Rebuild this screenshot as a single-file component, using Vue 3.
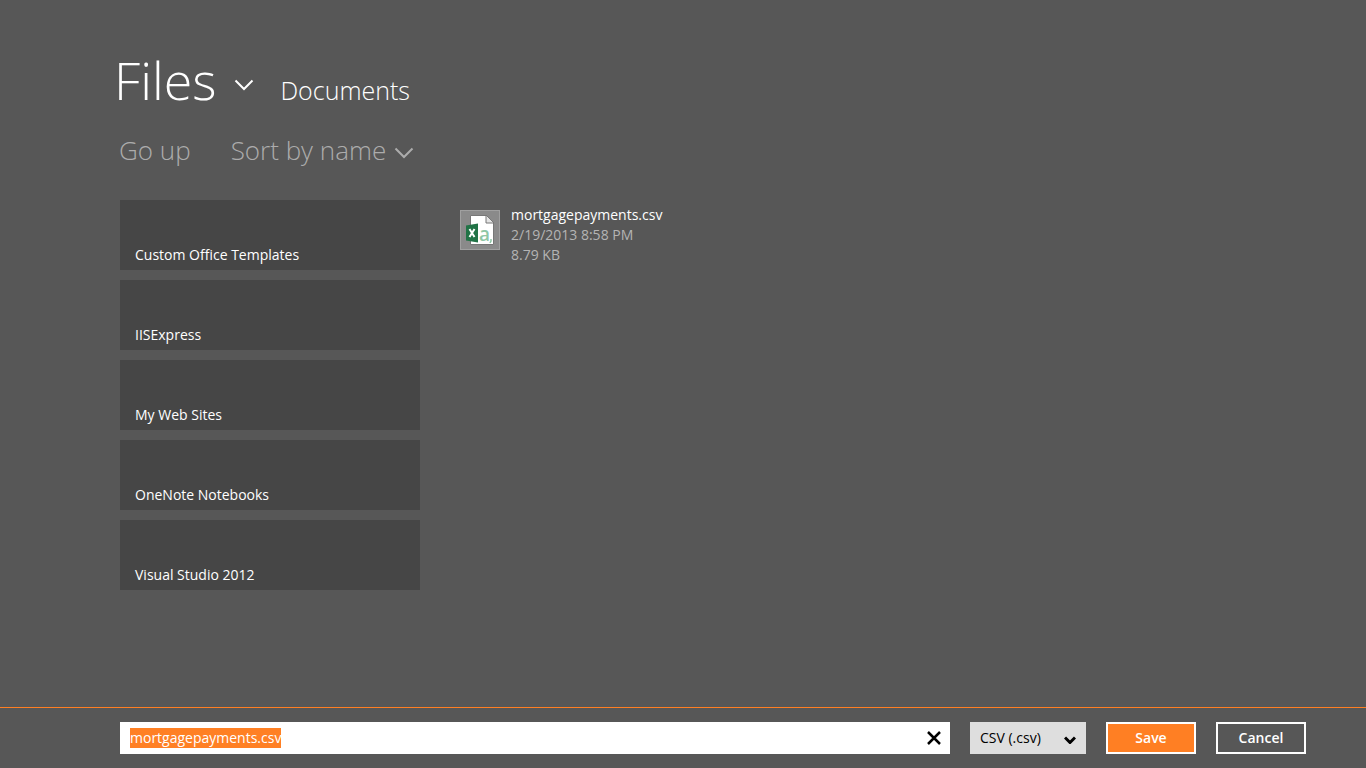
<template>
  <div class="picker">
    <header class="picker-header">
      <div class="location">
        <h1 class="location-title">
          <button type="button" class="location-button">
            Files
            <svg class="chevron" viewBox="0 0 20 12" aria-hidden="true">
              <path d="M1.5 1.5 10 10l8.5-8.5" />
            </svg>
          </button>
        </h1>
        <h2 class="location-folder">Documents</h2>
      </div>
      <nav class="commands" aria-label="Folder commands">
        <button type="button" class="command">Go up</button>
        <button type="button" class="command">
          Sort by name
          <svg class="chevron" viewBox="0 0 20 12" aria-hidden="true">
            <path d="M1.5 1.5 10 10l8.5-8.5" />
          </svg>
        </button>
      </nav>
    </header>

    <main class="items">
      <ul class="folders">
        <li v-for="folder in folders" :key="folder">
          <button type="button" class="folder">{{ folder }}</button>
        </li>
      </ul>

      <ul class="files">
        <li v-for="file in files" :key="file.name">
          <button type="button" class="file">
            <svg class="file-icon" viewBox="0 0 40 40" aria-hidden="true">
              <rect x="0.5" y="0.5" width="39" height="39" fill="#8a8a8a" stroke="#a0a0a0" />
              <path d="M10.5 5.5h16l7 7v22h-23z" fill="#fff" stroke="#777" />
              <path d="M26 5v8h8z" fill="#e4e4e4" stroke="#777" />
              <path d="m6 15.5 12-2v19l-12-2z" fill="#217346" />
              <path d="m9.500 19 5 8m0-8-5 8" fill="none" stroke="#fff" stroke-width="2" />
              <text x="19" y="31" class="icon-letter">a</text>
              <path d="M31 29v2l-1 2" fill="none" stroke="#8fc7a6" stroke-width="1.5" />
            </svg>
            <span class="file-info">
              <span class="file-name">{{ file.name }}</span>
              <span>{{ file.modified }}</span>
              <span>{{ file.size }}</span>
            </span>
          </button>
        </li>
      </ul>
    </main>

    <form class="save-bar" @submit.prevent>
      <div class="name-field">
        <input
          ref="nameInput"
          v-model="fileName"
          type="text"
          class="name-input"
          aria-label="File name"
          autocomplete="off"
          spellcheck="false"
        />
        <button type="button" class="clear" aria-label="Clear" @click="clearName">
          <svg viewBox="0 0 14 14" aria-hidden="true">
            <path d="m1 1 12 12M13 1 1 13" />
          </svg>
        </button>
      </div>
      <div class="type-field">
        <select v-model="fileType" class="type-select" aria-label="File type">
          <option value="csv">CSV (.csv)</option>
        </select>
        <svg class="type-arrow" viewBox="0 0 12 8" aria-hidden="true">
          <path d="m1 1.500 5 5 5-5" />
        </svg>
      </div>
      <button type="submit" class="action primary">Save</button>
      <button type="button" class="action">Cancel</button>
    </form>
  </div>
</template>

<script setup>
import { ref, onMounted } from "vue";

const folders = ref([
  "Custom Office Templates",
  "IISExpress",
  "My Web Sites",
  "OneNote Notebooks",
  "Visual Studio 2012",
]);

const files = ref([
  {
    name: "mortgagepayments.csv",
    modified: "2/19/2013 8:58 PM",
    size: "8.79 KB",
  },
]);

const fileName = ref("mortgagepayments.csv");
const fileType = ref("csv");
const nameInput = ref(null);

const clearName = () => {
  fileName.value = "";
  nameInput.value.focus();
};

// The suggested name starts selected so typing replaces it
onMounted(() => {
  nameInput.value.focus();
  nameInput.value.select();
});
</script>

<style>
body {
  background: #575757;
}
</style>

<style scoped>
.picker {
  display: flex;
  flex-direction: column;
  box-sizing: border-box;
  min-height: 100vh;
  background: #575757;
  color: #fff;
  font-family: "Open Sans", "Noto Sans", sans-serif;
  font-size: 14px;
  line-height: 20px;
}

button,
input,
select {
  font: inherit;
  color: inherit;
}

button {
  padding: 0;
  border: 0;
  background: none;
  cursor: pointer;
}

ul {
  margin: 0;
  padding: 0;
  list-style: none;
}

.picker-header {
  padding: 44px 60px 0 114px;
}

.location {
  display: flex;
  align-items: baseline;
  gap: 26px;
}

.location-title,
.location-folder {
  margin: 0;
  font-weight: 300;
}

.location-title {
  font-size: 52px;
  line-height: 72px;
}

.location-button {
  display: flex;
  align-items: center;
  gap: 18px;
}

.location-folder {
  font-size: 25px;
  line-height: 36px;
}

.chevron {
  width: 20px;
  height: 12px;
  fill: none;
  stroke: currentColor;
  stroke-width: 2;
}

.location-button .chevron {
  margin-top: 10px;
}

.commands {
  display: flex;
  gap: 40px;
  margin-top: 16px;
  padding-left: 5px;
}

.command {
  display: flex;
  align-items: center;
  gap: 8px;
  color: #acacac;
  font-size: 26px;
  font-weight: 300;
  line-height: 36px;
}

.command .chevron {
  margin-top: 6px;
}

.items {
  display: flex;
  flex: 1;
  gap: 40px;
  padding: 32px 60px 40px 120px;
}

.folders {
  display: flex;
  flex-direction: column;
  gap: 10px;
  width: 300px;
}

.folder {
  display: flex;
  align-items: flex-end;
  width: 100%;
  height: 70px;
  padding: 0 15px 5px;
  background: #464646;
  text-align: left;
}

.files {
  padding-top: 5px;
}

.file {
  display: flex;
  gap: 11px;
  color: #b4b4b4;
  text-align: left;
}

.file-icon {
  width: 40px;
  height: 40px;
  margin-top: 5px;
}

.icon-letter {
  fill: #8fc7a6;
  font-size: 19px;
  font-weight: 600;
}

.file-info {
  display: flex;
  flex-direction: column;
}

.file-name {
  color: #fff;
}

.save-bar {
  display: flex;
  gap: 20px;
  padding: 14px 60px 14px 120px;
  border-top: 1px solid #ff7f23;
}

.name-field {
  display: flex;
  flex: 1;
  height: 32px;
  background: #fff;
  color: #000;
}

.name-input {
  flex: 1;
  min-width: 0;
  padding: 0 10px;
  border: 0;
  outline: 0;
  background: transparent;
}

.name-input::selection {
  background: rgba(255, 127, 35, 0.996);
  color: #fff;
}

.clear {
  display: flex;
  align-items: center;
  justify-content: center;
  width: 32px;
}

.clear svg {
  width: 14px;
  height: 14px;
  fill: none;
  stroke: #000;
  stroke-width: 2.5;
}

.type-field {
  position: relative;
  width: 116px;
}

.type-select {
  width: 100%;
  height: 32px;
  padding: 0 28px 0 10px;
  border: 0;
  border-radius: 0;
  appearance: none;
  background: #dedede;
  color: #000;
}

.type-arrow {
  position: absolute;
  top: 14px;
  right: 10px;
  width: 12px;
  height: 8px;
  fill: none;
  stroke: #000;
  stroke-width: 3;
  pointer-events: none;
}

.action {
  box-sizing: border-box;
  width: 90px;
  height: 32px;
  border: 2px solid #fff;
  font-weight: 600;
}

.action.primary {
  background: #ff7f23;
}
</style>
